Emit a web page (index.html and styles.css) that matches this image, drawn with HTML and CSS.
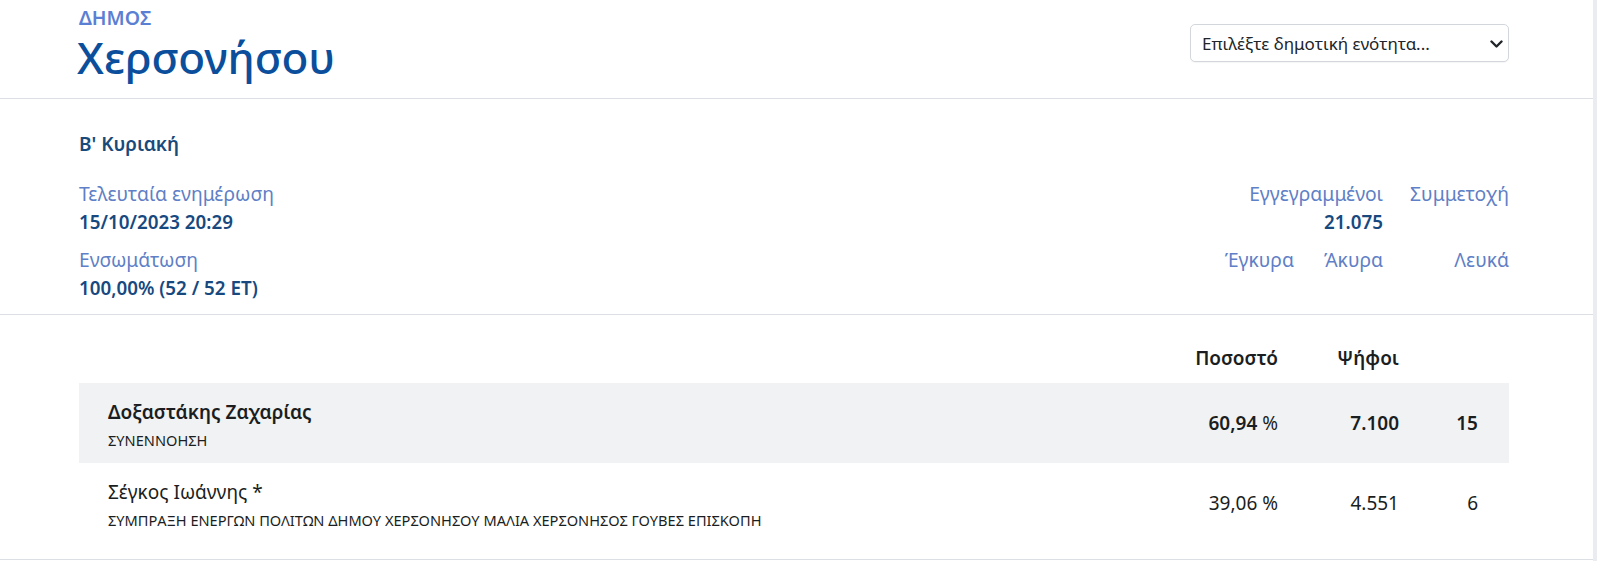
FILE: index.html
```html
<!DOCTYPE html>
<html lang="el">
<head>
<meta charset="utf-8">
<title>Δήμος Χερσονήσου</title>
<link rel="stylesheet" href="styles.css">
</head>
<body>
<div class="page">
  <header class="header">
    <div class="title">
      <div class="kicker">ΔΗΜΟΣ</div>
      <h1 class="name">Χερσονήσου</h1>
    </div>
    <div class="select-wrap">
      <select class="select">
        <option>Επιλέξτε δημοτική ενότητα...</option>
      </select>
      <svg class="chevron" width="13" height="8" viewBox="0 0 13 8"><path d="M1.5 1.5 6.5 6.5 11.5 1.5" fill="none" stroke="#212529" stroke-width="2.4" stroke-linecap="round" stroke-linejoin="round"/></svg>
    </div>
  </header>

  <section class="summary">
    <div class="round">Β' Κυριακή</div>
    <div class="stats">
      <div class="stats-left">
        <div class="stat">
          <div class="label">Τελευταία ενημέρωση</div>
          <div class="value">15/10/2023 20:29</div>
        </div>
        <div class="stat">
          <div class="label">Ενσωμάτωση</div>
          <div class="value">100,00% (52 / 52 ΕΤ)</div>
        </div>
      </div>
      <div class="stats-right">
        <div class="stat-row">
          <div class="stat right">
            <div class="label">Εγγεγραμμένοι</div>
            <div class="value">21.075</div>
          </div>
          <div class="stat right wide">
            <div class="label">Συμμετοχή</div>
            <div class="value"></div>
          </div>
        </div>
        <div class="stat-row">
          <div class="stat right">
            <div class="label">Έγκυρα</div>
          </div>
          <div class="stat right">
            <div class="label">Άκυρα</div>
          </div>
          <div class="stat right wide">
            <div class="label">Λευκά</div>
          </div>
        </div>
      </div>
    </div>
  </section>

  <section class="results">
    <div class="thead">
      <div></div>
      <div class="num">Ποσοστό</div>
      <div class="num">Ψήφοι</div>
      <div></div>
    </div>
    <div class="trow winner">
      <div class="cand">
        <div class="cand-name">Δοξαστάκης Ζαχαρίας</div>
        <div class="party">ΣΥΝΕΝΝΟΗΣΗ</div>
      </div>
      <div class="num">60,94 <span class="pct">%</span></div>
      <div class="num">7.100</div>
      <div class="num">15</div>
    </div>
    <div class="trow">
      <div class="cand">
        <div class="cand-name">Σέγκος Ιωάννης *</div>
        <div class="party">ΣΥΜΠΡΑΞΗ ΕΝΕΡΓΩΝ ΠΟΛΙΤΩΝ ΔΗΜΟΥ ΧΕΡΣΟΝΗΣΟΥ ΜΑΛΙΑ ΧΕΡΣΟΝΗΣΟΣ ΓΟΥΒΕΣ ΕΠΙΣΚΟΠΗ</div>
      </div>
      <div class="num">39,06 %</div>
      <div class="num">4.551</div>
      <div class="num">6</div>
    </div>
  </section>
</div>
</body>
</html>
```

FILE: styles.css
```css
* { box-sizing: border-box; }
html, body { margin: 0; padding: 0; }
body {
  background: #eaecef;
  font-family: "Noto Sans", "Open Sans", sans-serif;
  color: #212529;
}
.page {
  margin-right: 4px;
  background: #ffffff;
  min-height: 561px;
}

/* Header */
.header {
  display: flex;
  justify-content: space-between;
  align-items: flex-start;
  height: 99px;
  padding: 7px 84px 0 79px;
  border-bottom: 1px solid #dcdfe3;
}
.kicker {
  font-size: 19.5px;
  font-weight: 600;
  line-height: 22px;
  color: #5b7fd3;
}
.name {
  margin: 2px 0 0 -2px;
  font-size: 44px;
  font-weight: 500;
  line-height: 52px;
  color: #0b4f9c;
}
.select-wrap {
  position: relative;
  margin-top: 17px;
}
.select {
  appearance: none;
  -webkit-appearance: none;
  width: 319px;
  height: 38px;
  padding: 0 30px 0 11px;
  font-family: "Noto Sans", "Open Sans", sans-serif;
  font-size: 17px;
  color: #212529;
  background: #fff;
  border: 1px solid #d3d7dc;
  border-radius: 5px;
  box-shadow: 0 1px 1px rgba(0,0,0,0.04);
}
.chevron {
  position: absolute;
  right: 6px;
  top: 16px;
  pointer-events: none;
}

/* Summary */
.summary {
  padding: 31px 84px 12px 79px;
  border-bottom: 1px solid #dcdfe3;
}
.round {
  font-size: 19px;
  font-weight: 600;
  line-height: 28px;
  color: #194a7c;
}
.stats {
  display: flex;
  justify-content: space-between;
  margin-top: 22px;
}
.stats-left, .stats-right {
  display: flex;
  flex-direction: column;
  gap: 10px;
}
.stat-row {
  display: flex;
  justify-content: flex-end;
  gap: 30px;
}
.stat { white-space: nowrap; }
.stat.right { text-align: right; }
.stat.wide {
  width: 99px;
  margin-left: -3px;
}
.label {
  font-size: 19.3px;
  line-height: 28px;
  color: #5f7fc6;
}
.value {
  font-size: 18.8px;
  font-weight: 600;
  line-height: 28px;
  color: #17497f;
  min-height: 28px;
}

/* Results */
.results {
  padding: 29px 84px 16px 79px;
  border-bottom: 1px solid #dcdfe3;
}
.thead, .trow {
  display: grid;
  grid-template-columns: 1fr 120px 121px 79px;
  padding: 0 31px 0 29px;
}
.thead {
  font-size: 19px;
  font-weight: 600;
  line-height: 28px;
  color: #1b1e21;
  padding-bottom: 11px;
}
.num { text-align: right; }
.trow {
  height: 80px;
  align-items: center;
  font-size: 19px;
  line-height: 28px;
  color: #1b1e21;
}
.trow.winner {
  background: #f1f2f4;
  font-weight: 600;
}
.pct { font-weight: 400; }
.cand {
  align-self: start;
  padding-top: 15px;
}
.cand-name {
  font-size: 19px;
  line-height: 28px;
}
.party {
  font-size: 14.6px;
  font-weight: 400;
  line-height: 28px;
}
```
